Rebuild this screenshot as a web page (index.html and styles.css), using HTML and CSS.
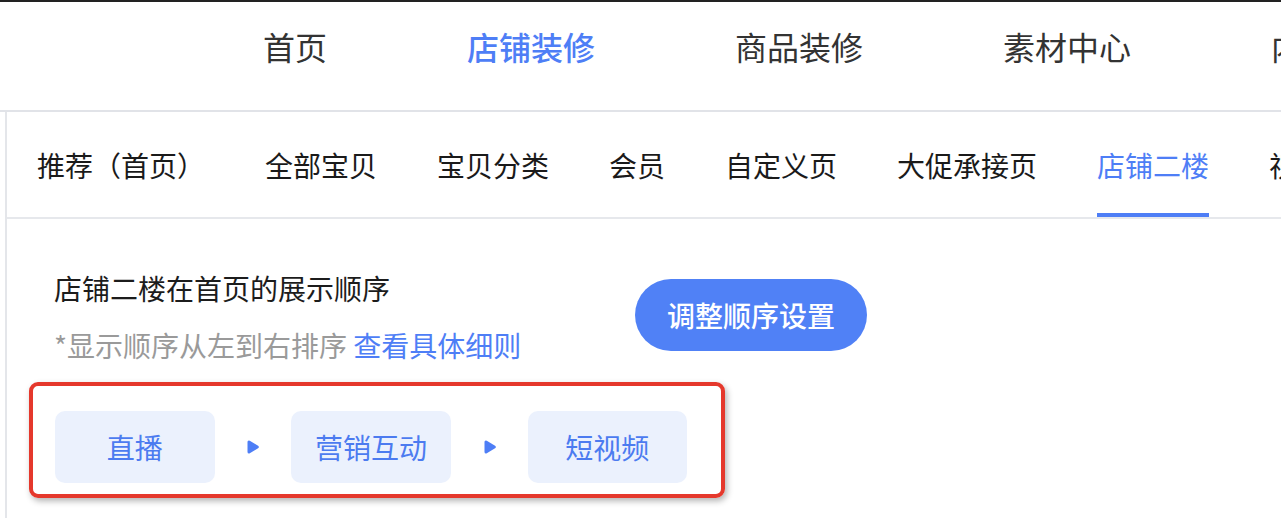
FILE: index.html
```html
<!DOCTYPE html>
<html lang="zh-CN">
<head>
    <meta charset="UTF-8">
    <meta name="viewport" content="width=device-width, initial-scale=1.0">
    <title>店铺二楼 - 店铺装修</title>
    <link rel="stylesheet" href="styles.css">
</head>
<body>
    <header class="top-nav">
        <a class="nav-item">首页</a>
        <a class="nav-item active">店铺装修</a>
        <a class="nav-item">商品装修</a>
        <a class="nav-item">素材中心</a>
        <a class="nav-item">内容中心</a>
    </header>

    <div class="main">
        <nav class="tabs">
            <a class="tab">推荐（首页）</a>
            <a class="tab">全部宝贝</a>
            <a class="tab">宝贝分类</a>
            <a class="tab">会员</a>
            <a class="tab">自定义页</a>
            <a class="tab">大促承接页</a>
            <a class="tab active">店铺二楼</a>
            <a class="tab">视频</a>
        </nav>

        <section class="content">
            <div class="intro">
                <div class="intro-text">
                    <h2 class="intro-title">店铺二楼在首页的展示顺序</h2>
                    <p class="intro-tip">*显示顺序从左到右排序 <a class="link">查看具体细则</a></p>
                </div>
                <button class="btn-primary">调整顺序设置</button>
            </div>

            <div class="order-box">
                <div class="order-card">直播</div>
                <div class="order-arrow">
                    <svg width="12" height="14" viewBox="0 0 12 14"><polygon points="2,2 2,12 10.3,7" fill="#4e7ef6" stroke="#4e7ef6" stroke-width="3" stroke-linejoin="round"/></svg>
                </div>
                <div class="order-card">营销互动</div>
                <div class="order-arrow">
                    <svg width="12" height="14" viewBox="0 0 12 14"><polygon points="2,2 2,12 10.3,7" fill="#4e7ef6" stroke="#4e7ef6" stroke-width="3" stroke-linejoin="round"/></svg>
                </div>
                <div class="order-card">短视频</div>
            </div>
        </section>
    </div>
</body>
</html>
```

FILE: styles.css
```css
body {
    margin: 0;
    font-family: "Noto Sans CJK SC", "Noto Sans", sans-serif;
    background-color: #fff;
    color: #1c1c1c;
    overflow: hidden;
}
a {
    text-decoration: none;
    color: inherit;
}
.top-nav {
    display: flex;
    gap: 140px;
    box-sizing: border-box;
    height: 112px;
    padding: 28px 0 0 263px;
    border-top: 2px solid #222;
    border-bottom: 2px solid #e1e3e8;
    white-space: nowrap;
}
.nav-item {
    font-size: 32px;
    line-height: 32px;
    color: #333;
}
.nav-item.active {
    color: #4e7ef6;
    font-weight: 500;
}
.main {
    margin-left: 5px;
    border-left: 2px solid #e4e6ea;
    min-height: 420px;
}
.tabs {
    display: flex;
    gap: 60px;
    height: 105px;
    padding-left: 30px;
    border-bottom: 2px solid #e6e8ec;
    white-space: nowrap;
}
.tab {
    display: flex;
    align-items: center;
    box-sizing: border-box;
    padding-top: 4px;
    border-bottom: 4px solid transparent;
    font-size: 28px;
    color: #1a1a1a;
}
.tab.active {
    color: #4e7ef6;
    border-bottom-color: #4e7ef6;
}
.content {
    padding: 49px 0 0 22px;
}
.intro {
    display: flex;
    align-items: center;
    padding-left: 25px;
}
.intro-text {
    width: 581px;
}
.intro-title {
    margin: 0;
    font-size: 28px;
    font-weight: 400;
    line-height: 40px;
    color: #1c1c1c;
}
.intro-tip {
    margin: 17px 0 0;
    font-size: 28px;
    line-height: 40px;
    color: #9a9a9a;
}
.link {
    color: #4e7ef6;
}
.btn-primary {
    width: 232px;
    height: 72px;
    margin-top: -3px;
    border: none;
    border-radius: 36px;
    background-color: #5081f6;
    color: #fff;
    font-family: inherit;
    font-size: 28px;
    font-weight: 500;
}
.order-box {
    display: flex;
    align-items: center;
    box-sizing: border-box;
    width: 696px;
    margin-top: 17px;
    padding: 25px 34px 11px 22px;
    border: 4px solid #e5382c;
    border-radius: 9px;
    box-shadow: 2px 3px 6px rgba(0, 0, 0, 0.3);
}
.order-card {
    display: flex;
    align-items: center;
    justify-content: center;
    width: 160px;
    height: 72px;
    border-radius: 10px;
    background-color: #ebf1fd;
    color: #4c7bf0;
    font-size: 28px;
}
.order-arrow {
    display: flex;
    justify-content: center;
    width: 76px;
    padding-left: 1px;
}
.order-arrow svg {
    display: block;
}
```
